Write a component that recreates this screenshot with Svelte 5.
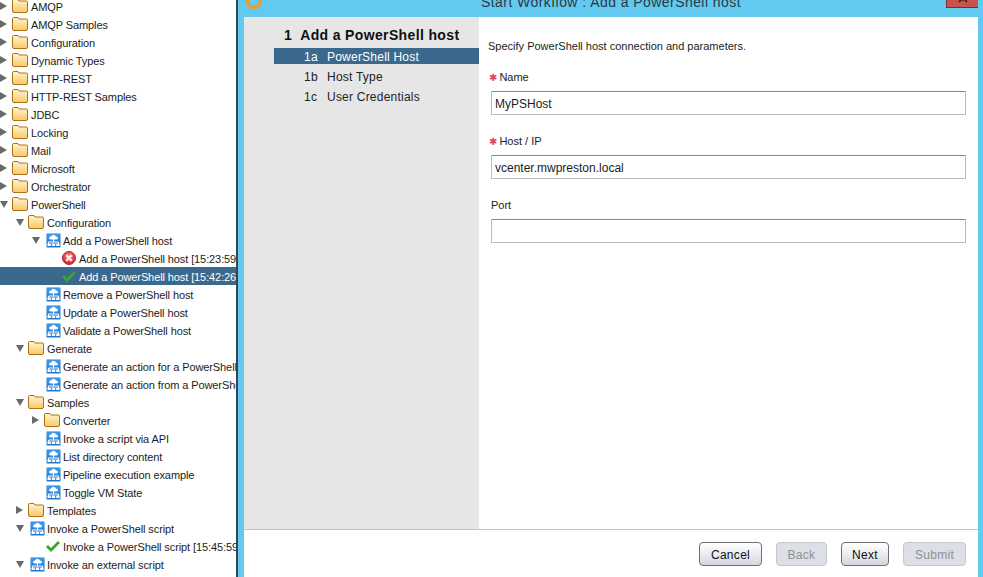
<script lang="ts">
  type Row = { label: string; level: number; icon: string; arrow?: "open" | "closed"; selected?: boolean };

  const closedFolder = (label: string, level = 0): Row => ({ label, level, icon: "folder", arrow: "closed" });
  const openFolder = (label: string, level = 0): Row => ({ label, level, icon: "folder", arrow: "open" });
  const flow = (label: string, level = 2): Row => ({ label, level, icon: "flow" });

  const rows: Row[] = [
    closedFolder("AMQP"),
    closedFolder("AMQP Samples"),
    closedFolder("Configuration"),
    closedFolder("Dynamic Types"),
    closedFolder("HTTP-REST"),
    closedFolder("HTTP-REST Samples"),
    closedFolder("JDBC"),
    closedFolder("Locking"),
    closedFolder("Mail"),
    closedFolder("Microsoft"),
    closedFolder("Orchestrator"),
    openFolder("PowerShell"),
    openFolder("Configuration", 1),
    { label: "Add a PowerShell host", level: 2, icon: "flow", arrow: "open" },
    { label: "Add a PowerShell host [15:23:59]", level: 3, icon: "error" },
    { label: "Add a PowerShell host [15:42:26]", level: 3, icon: "ok", selected: true },
    flow("Remove a PowerShell host"),
    flow("Update a PowerShell host"),
    flow("Validate a PowerShell host"),
    openFolder("Generate", 1),
    flow("Generate an action for a PowerShell script"),
    flow("Generate an action from a PowerShell script"),
    openFolder("Samples", 1),
    closedFolder("Converter", 2),
    flow("Invoke a script via API"),
    flow("List directory content"),
    flow("Pipeline execution example"),
    flow("Toggle VM State"),
    closedFolder("Templates", 1),
    { label: "Invoke a PowerShell script", level: 1, icon: "flow", arrow: "open" },
    { label: "Invoke a PowerShell script [15:45:59]", level: 2, icon: "ok" },
    { label: "Invoke an external script", level: 1, icon: "flow", arrow: "open" }
  ];

  const steps = [
    { num: "1a", label: "PowerShell Host", active: true },
    { num: "1b", label: "Host Type", active: false },
    { num: "1c", label: "User Credentials", active: false }
  ];

  const fields = [
    { label: "Name", value: "MyPSHost", required: true },
    { label: "Host / IP", value: "vcenter.mwpreston.local", required: true },
    { label: "Port", value: "", required: false }
  ];

  const buttons = [
    { label: "Cancel", width: 63, disabled: false },
    { label: "Back", width: 51, disabled: true },
    { label: "Next", width: 48, disabled: false },
    { label: "Submit", width: 63, disabled: true }
  ];
</script>

<div class="page">
  <aside class="tree">
    {#each rows as row}
      <div class="row" class:selected={row.selected} style="padding-left: {row.level * 16}px">
        <span class="arrow">
          {#if row.arrow === "closed"}
            <svg width="8" height="10" viewBox="0 0 8 10"><path d="M0 1 L7 5 L0 9 Z" fill="#6a6a6a" /></svg>
          {:else if row.arrow === "open"}
            <svg width="8" height="10" viewBox="0 0 8 10"><path d="M0 2 L8 2 L4 9 Z" fill="#6a6a6a" /></svg>
          {/if}
        </span>
        <span class="icon">
          {#if row.icon === "folder"}
            <svg class="folder" width="16" height="14" viewBox="0 0 16 14">
              <defs>
                <linearGradient id="fold" x1="0" y1="0" x2="0" y2="1">
                  <stop offset="0" stop-color="#fff3cf" />
                  <stop offset="1" stop-color="#fbc768" />
                </linearGradient>
              </defs>
              <path d="M0.5 12 V1.5 Q0.5 0.5 1.5 0.5 H6 L7 2 H14.5 Q15.5 2 15.5 3 V12 Q15.5 13.5 14 13.5 H2 Q0.5 13.5 0.5 12 Z" fill="url(#fold)" stroke="#ab7417" />
            </svg>
          {:else if row.icon === "flow"}
            <svg width="15" height="15" viewBox="0 0 15 15">
              <defs>
                <linearGradient id="flowbg" x1="0" y1="0" x2="0" y2="1">
                  <stop offset="0" stop-color="#3f9be8" />
                  <stop offset="1" stop-color="#1f74cf" />
                </linearGradient>
              </defs>
              <rect x="0.5" y="0.5" width="14" height="14" rx="1" fill="url(#flowbg)" stroke="#8cc0ec" />
              <path d="M3 5 Q3 3.4 5 3.4 Q5.8 2 7.5 2 Q9.2 2 10 3.4 Q12 3.4 12 5 Q12 6.6 10 6.6 H5 Q3 6.6 3 5 Z" fill="#fff" />
              <path d="M7.5 6 V9.5 M2.5 11 V9 H12.5 V11" stroke="#fff" fill="none" />
              <rect x="1.5" y="10.5" width="12" height="2.5" fill="#fff" />
              <path d="M5.3 10.5 V13 M9.7 10.5 V13" stroke="#2a7fd6" />
            </svg>
          {:else if row.icon === "error"}
            <svg width="14" height="14" viewBox="0 0 14 14">
              <defs>
                <radialGradient id="errbg" cx="0.5" cy="0.3" r="0.8">
                  <stop offset="0" stop-color="#f47a78" />
                  <stop offset="1" stop-color="#c9181e" />
                </radialGradient>
              </defs>
              <circle cx="7" cy="7" r="6.5" fill="url(#errbg)" stroke="#b8242a" />
              <path d="M4.2 4.2 L9.8 9.8 M9.8 4.2 L4.2 9.8" stroke="#fde8e6" stroke-width="2.4" />
            </svg>
          {:else}
            <svg width="14" height="12" viewBox="0 0 14 12">
              <path d="M1 6 L5 10 L13 2" fill="none" stroke="#3aa52a" stroke-width="2.8" />
            </svg>
          {/if}
        </span>
        <span class="label">{row.label}</span>
      </div>
    {/each}
  </aside>

  <main class="window">
    <header class="titlebar">
      <span class="ring"></span>
      <span class="title">Start Workflow : Add a PowerShell host</span>
      <span class="close">
        <svg width="32" height="8" viewBox="0 0 32 8"><path d="M12 -4 L16 1 L20 -4 M12 3 L14 1 M20 3 L18 1" stroke="#2a1a18" stroke-width="1.6" fill="none" /></svg>
      </span>
    </header>

    <div class="dialog">
      <div class="body">
        <nav class="steps">
          <h2><span>1</span>Add a PowerShell host</h2>
          {#each steps as step}
            <div class="step" class:active={step.active}>
              <span class="num">{step.num}</span>{step.label}
            </div>
          {/each}
        </nav>

        <form class="form">
          <p class="intro">Specify PowerShell host connection and parameters.</p>
          {#each fields as field}
            <div class="field">
              <span class="field-label">
                {#if field.required}<span class="req">✱</span>{/if}{field.label}
              </span>
              <input type="text" value={field.value} />
            </div>
          {/each}
        </form>
      </div>

      <footer class="actions">
        {#each buttons as button}
          <button type="button" disabled={button.disabled} style="width: {button.width}px">{button.label}</button>
        {/each}
      </footer>
    </div>
  </main>
</div>

<style>
  :global(body) {
    margin: 0;
    background: #fff;
  }

  .page {
    display: flex;
    width: 983px;
    height: 577px;
    overflow: hidden;
    font-family: "Liberation Sans", Arial, sans-serif;
    font-size: 11px;
    color: #1c1c1c;
  }

  .tree {
    width: 236px;
    flex: none;
    margin-top: -3px;
    overflow: hidden;
    background: #fff;
  }

  .row {
    display: flex;
    align-items: center;
    height: 18px;
    white-space: nowrap;
    letter-spacing: -0.1px;
  }

  .row.selected {
    background: #3b698e;
    color: #fff;
  }

  .arrow {
    width: 12px;
    flex: none;
    display: flex;
    align-items: center;
  }

  .icon {
    width: 18px;
    flex: none;
    display: flex;
    align-items: center;
    justify-content: center;
  }

  .icon .folder {
    margin-right: 2px;
  }

  .label {
    flex: none;
    padding: 2px 0 0 1px;
  }

  .window {
    flex: 1;
    display: flex;
    flex-direction: column;
    min-width: 0;
    background: #62c9f1;
    border-left: 2px solid #3a4450;
    padding: 0 5px 0 6px;
  }

  .titlebar {
    position: relative;
    height: 17px;
    flex: none;
    overflow: hidden;
  }

  .ring {
    position: absolute;
    left: 2px;
    top: -7px;
    width: 10px;
    height: 10px;
    border: 3px solid #f29a1f;
    border-radius: 50%;
  }

  .title {
    position: absolute;
    left: 237px;
    top: -6px;
    font-size: 14px;
    line-height: 16px;
    letter-spacing: 0.44px;
    white-space: nowrap;
    color: #2a3a44;
  }

  .close {
    position: absolute;
    right: -2px;
    top: -8px;
    width: 32px;
    height: 14px;
    background: #c9524c;
    border: 1px solid #6e3430;
    display: flex;
    align-items: flex-end;
  }

  .dialog {
    flex: 1;
    display: flex;
    flex-direction: column;
    min-height: 0;
    background: #fff;
  }

  .body {
    flex: 1;
    display: flex;
    min-height: 0;
  }

  .steps {
    width: 235px;
    flex: none;
    background: #e6e6e6;
    padding: 9px 0 0 30px;
    box-sizing: border-box;
  }

  .steps h2 {
    margin: 0 0 2px 10px;
    height: 20px;
    font-size: 14px;
    line-height: 19px;
    font-weight: 700;
    letter-spacing: 0.36px;
    color: #111;
    white-space: nowrap;
  }

  .steps h2 span {
    margin-right: 8px;
  }

  .step {
    height: 20px;
    line-height: 18px;
    padding-left: 30px;
    font-size: 12px;
    letter-spacing: 0.22px;
    color: #222;
  }

  .step .num {
    display: inline-block;
    width: 23px;
  }

  .step.active {
    height: 16px;
    margin-bottom: 4px;
    background: #3b698e;
    color: #fff;
  }

  .form {
    flex: 1;
    padding: 23px 12px 0 9px;
    min-width: 0;
  }

  .intro {
    margin: 0 0 16px;
    line-height: 13px;
  }

  .field {
    height: 64px;
    display: flex;
    flex-direction: column;
    padding-left: 3px;
  }

  .field-label {
    height: 14px;
    line-height: 16px;
    margin-bottom: 8px;
  }

  .req {
    color: #d8475a;
    font-family: "DejaVu Sans", sans-serif;
    font-size: 10px;
    margin: 0 2px 0 -2px;
  }

  .field input {
    box-sizing: border-box;
    width: 475px;
    height: 24px;
    padding: 2px 3px 0;
    border: 1px solid #bdbdbd;
    border-top-color: #8b8b8b;
    border-radius: 0;
    outline: none;
    background: #fff;
    font: 12px "Liberation Sans", Arial, sans-serif;
    color: #1c1c1c;
  }

  .actions {
    height: 48px;
    flex: none;
    box-sizing: border-box;
    border-top: 1px solid #c4c4c4;
    display: flex;
    justify-content: flex-end;
    align-items: flex-start;
    gap: 14px;
    padding: 12px 12px 0 0;
  }

  .actions button {
    height: 24px;
    padding: 1px 0 0;
    border: 1px solid #6c7079;
    border-radius: 4px;
    background: linear-gradient(#ffffff, #e9ebf1 55%, #d3d6de);
    font: 12px "Liberation Sans", Arial, sans-serif;
    letter-spacing: 0.3px;
    color: #111;
  }

  .actions button:disabled {
    border-color: #c3c6cd;
    background: #dcdfe5;
    color: #8e9095;
  }
</style>
